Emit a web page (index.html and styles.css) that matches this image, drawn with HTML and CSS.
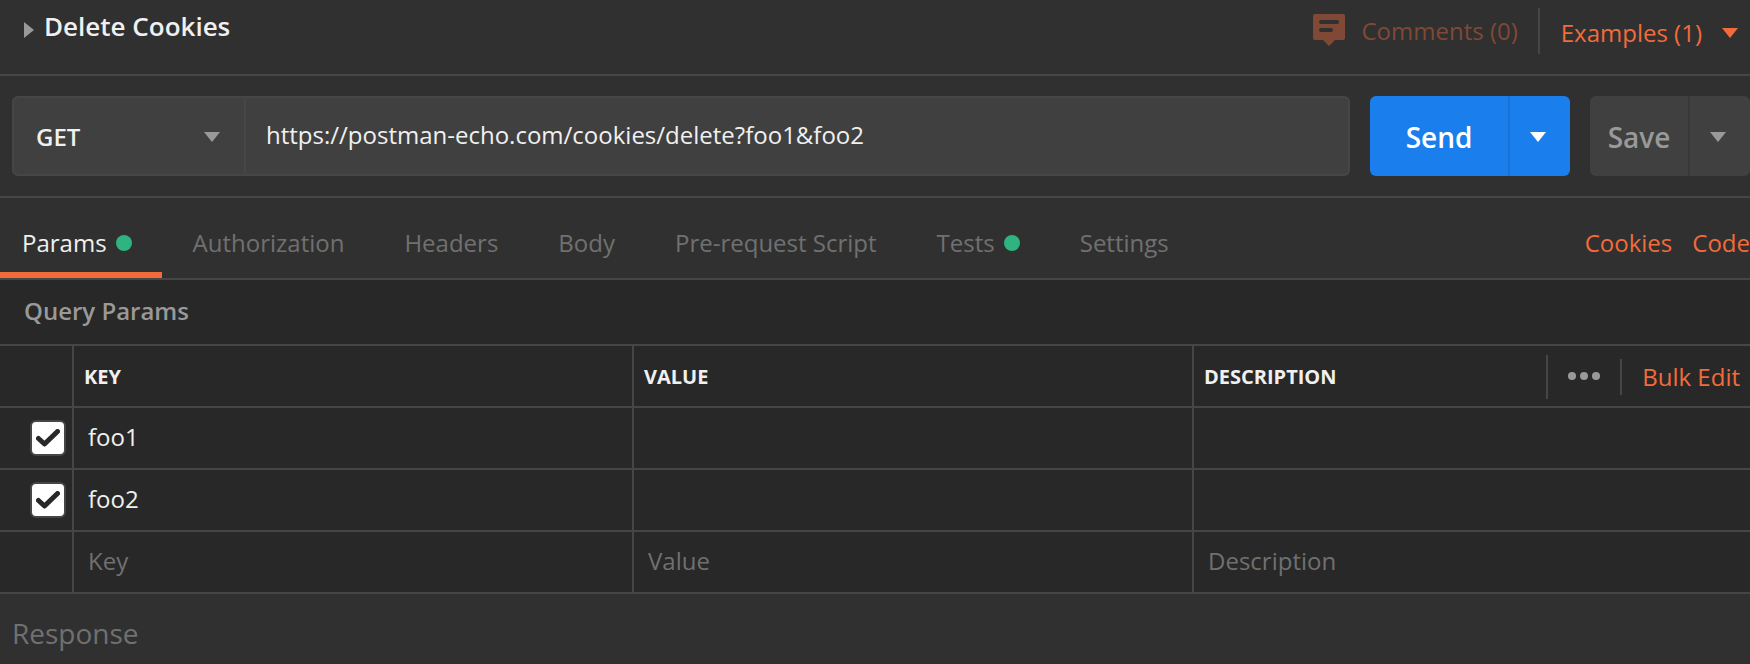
FILE: index.html
```html
<!DOCTYPE html>
<html lang="en">
<head>
<meta charset="utf-8">
<title>Delete Cookies</title>
<link rel="stylesheet" href="styles.css">
</head>
<body>
<header class="topbar">
  <button class="title" type="button" aria-expanded="false">
    <svg class="title-caret" width="10" height="16" viewBox="0 0 10 16" aria-hidden="true"><path d="M0 0L10 8L0 16Z" fill="currentColor"/></svg>
    <span>Delete Cookies</span>
  </button>
  <div class="topbar-actions">
    <button class="comments" type="button" disabled>
      <svg class="comments-icon" width="32" height="32" viewBox="0 0 32 32" aria-hidden="true">
        <path d="M2 0H30Q32 0 32 2V24Q32 26 30 26H22L16 32L10 26H2Q0 26 0 24V2Q0 0 2 0Z" fill="currentColor"/>
        <path d="M8 8H24M8 16H18" class="comments-lines"/>
      </svg>
      <span>Comments (0)</span>
    </button>
    <button class="examples" type="button">
      <span>Examples (1)</span>
      <svg width="16" height="10" viewBox="0 0 16 10" aria-hidden="true"><path d="M0 0H16L8 10Z" fill="currentColor"/></svg>
    </button>
  </div>
</header>

<form class="request">
  <div class="address">
    <div class="method">
      <select class="method-select" aria-label="HTTP method">
        <option>GET</option>
        <option>POST</option>
        <option>PUT</option>
        <option>DELETE</option>
      </select>
      <svg class="method-caret" width="16" height="10" viewBox="0 0 16 10" aria-hidden="true"><path d="M0 0H16L8 10Z" fill="currentColor"/></svg>
    </div>
    <input class="url" type="text" aria-label="Request URL" value="https://postman-echo.com/cookies/delete?foo1&amp;foo2">
  </div>
  <div class="split send">
    <button class="split-main" type="button">Send</button>
    <button class="split-more" type="button" aria-label="More send options">
      <svg width="16" height="10" viewBox="0 0 16 10" aria-hidden="true"><path d="M0 0H16L8 10Z" fill="currentColor"/></svg>
    </button>
  </div>
  <div class="split save">
    <button class="split-main" type="button">Save</button>
    <button class="split-more" type="button" aria-label="More save options">
      <svg width="16" height="10" viewBox="0 0 16 10" aria-hidden="true"><path d="M0 0H16L8 10Z" fill="currentColor"/></svg>
    </button>
  </div>
</form>

<nav class="tabs">
  <button class="tab tab-active" type="button">Params<span class="dot"></span></button>
  <button class="tab" type="button">Authorization</button>
  <button class="tab" type="button">Headers</button>
  <button class="tab" type="button">Body</button>
  <button class="tab" type="button">Pre-request Script</button>
  <button class="tab" type="button">Tests<span class="dot"></span></button>
  <button class="tab" type="button">Settings</button>
  <div class="tab-links">
    <a href="#cookies">Cookies</a>
    <a href="#code">Code</a>
  </div>
</nav>

<main class="params">
  <h2 class="params-title">Query Params</h2>
  <table class="grid">
    <colgroup><col class="col-check"><col class="col-field"><col class="col-field"><col></colgroup>
    <thead>
      <tr>
        <td></td>
        <th scope="col">KEY</th>
        <th scope="col">VALUE</th>
        <th scope="col">
          <div class="last-head">
            <span>DESCRIPTION</span>
            <div class="grid-actions">
              <button class="more" type="button" aria-label="Column options">
                <svg width="32" height="8" viewBox="0 0 32 8" aria-hidden="true"><g fill="currentColor"><circle cx="4" cy="4" r="4"/><circle cx="16" cy="4" r="4"/><circle cx="28" cy="4" r="4"/></g></svg>
              </button>
              <button class="bulk" type="button">Bulk Edit</button>
            </div>
          </div>
        </th>
      </tr>
    </thead>
    <tbody>
      <tr>
        <td class="check-cell">
          <label class="check"><input type="checkbox" aria-label="Enable foo1" checked><svg width="24" height="18" viewBox="0 0 24 18" aria-hidden="true"><path d="M2.500 9.500L8.500 15L21.500 2.500"/></svg></label>
        </td>
        <td><input class="cell" type="text" aria-label="Key 1" value="foo1"></td>
        <td><input class="cell" type="text" aria-label="Value 1"></td>
        <td><input class="cell" type="text" aria-label="Description 1"></td>
      </tr>
      <tr>
        <td class="check-cell">
          <label class="check"><input type="checkbox" aria-label="Enable foo2" checked><svg width="24" height="18" viewBox="0 0 24 18" aria-hidden="true"><path d="M2.500 9.500L8.500 15L21.500 2.500"/></svg></label>
        </td>
        <td><input class="cell" type="text" aria-label="Key 2" value="foo2"></td>
        <td><input class="cell" type="text" aria-label="Value 2"></td>
        <td><input class="cell" type="text" aria-label="Description 2"></td>
      </tr>
      <tr>
        <td></td>
        <td><input class="cell" type="text" aria-label="New key" placeholder="Key"></td>
        <td><input class="cell" type="text" aria-label="New value" placeholder="Value"></td>
        <td><input class="cell" type="text" aria-label="New description" placeholder="Description"></td>
      </tr>
    </tbody>
  </table>
</main>

<section class="response">
  <h2 class="response-title">Response</h2>
</section>
</body>
</html>
```
FILE: styles.css
```css
:root {
  --bg: #303030;
  --panel: #282828;
  --field: #404040;
  --line: #464646;
  --text: #f0f0f0;
  --muted: #999999;
  --faint: #707070;
  --accent: #f26b3a;
  --blue: #1a7fec;
  --green: #2fb380;
}

* {
  box-sizing: border-box;
}

body {
  margin: 0;
  background: var(--bg);
  color: var(--text);
  font: 24px/36px "Open Sans", "Noto Sans", sans-serif;
}

button,
input,
select {
  margin: 0;
  padding: 0;
  border: 0;
  background: none;
  color: inherit;
  font: inherit;
  outline: 0;
}

svg {
  display: block;
  flex: none;
}

h2 {
  margin: 0;
}

/* Title bar */
.topbar {
  display: flex;
  justify-content: space-between;
  align-items: flex-start;
  padding: 8px 12px 20px 24px;
  border-bottom: 2px solid var(--line);
}

.title {
  display: flex;
  align-items: center;
  gap: 10px;
  font-size: 26px;
  font-weight: 600;
}

.title-caret {
  margin-top: 8px;
  color: var(--muted);
}

.topbar-actions {
  display: flex;
}

.comments,
.examples {
  display: flex;
  align-items: center;
  height: 46px;
  color: var(--accent);
}

.comments {
  gap: 16px;
  padding-right: 20px;
  border-right: 2px solid var(--line);
  color: #7f4936;
}

.comments-icon {
  margin-bottom: 2px;
}

.comments-lines {
  stroke: var(--bg);
  stroke-width: 4;
  stroke-linecap: round;
}

.examples {
  gap: 20px;
  padding: 4px 0 0 21px;
}

/* Request line */
.request {
  display: flex;
  gap: 20px;
  padding: 20px 0 20px 12px;
  border-bottom: 2px solid var(--line);
}

.address {
  display: flex;
  flex: 1;
  height: 80px;
  border: 2px solid var(--line);
  border-radius: 6px;
  background: var(--field);
}

.method {
  position: relative;
  width: 232px;
  border-right: 2px solid var(--line);
}

.method-select {
  width: 100%;
  height: 100%;
  padding: 2px 48px 0 22px;
  appearance: none;
  font-weight: 600;
}

.method-caret {
  position: absolute;
  top: 34px;
  right: 24px;
  color: var(--muted);
  pointer-events: none;
}

.url {
  flex: 1;
  padding: 0 20px 2px;
}

.split {
  display: flex;
  height: 80px;
  border-radius: 6px;
  overflow: hidden;
  font-size: 28px;
  font-weight: 600;
}

.split-main {
  flex: 1;
  padding-top: 2px;
}

.split-more {
  display: flex;
  align-items: center;
  width: 62px;
  padding: 2px 0 0 20px;
  border-left: 2px solid;
}

.send {
  width: 200px;
  background: var(--blue);
  color: #ffffff;
}

.save {
  width: 160px;
  background: var(--field);
  color: var(--muted);
}

.send .split-more {
  border-left-color: #1873d8;
}

.save .split-more {
  border-left-color: #383838;
}

/* Request tabs */
.tabs {
  display: flex;
  height: 82px;
  border-bottom: 2px solid var(--line);
}

.tab {
  display: flex;
  align-items: center;
  gap: 9px;
  padding: 16px 29px 0 31px;
  border-bottom: 6px solid transparent;
  color: var(--faint);
}

.tab-active {
  border-bottom-color: var(--accent);
  color: var(--text);
}

.tab:first-child {
  padding-left: 22px;
  padding-right: 30px;
}

.dot {
  width: 16px;
  height: 16px;
  border-radius: 50%;
  background: var(--green);
}

.tab-links {
  display: flex;
  align-items: center;
  gap: 20px;
  margin-left: auto;
  padding: 16px 0 6px;
}

.tab-links a {
  color: var(--accent);
  text-decoration: none;
}

/* Query parameter grid */
.params {
  background: var(--panel);
}

.params-title {
  padding: 13px 24px 15px;
  color: var(--muted);
  font-size: 24px;
  font-weight: 600;
}

.grid {
  width: 100%;
  table-layout: fixed;
  border-spacing: 0;
  border-top: 2px solid var(--line);
}

.col-check {
  width: 72px;
}

.col-field {
  width: 32%;
}

.grid th,
.grid td {
  height: 62px;
  padding: 0;
  border-bottom: 2px solid var(--line);
}

.grid th,
.grid td + td {
  border-left: 2px solid var(--line);
}

.grid th {
  padding: 2px 0 0 10px;
  font-size: 20px;
  font-weight: 700;
  text-align: left;
}

.last-head,
.grid-actions {
  display: flex;
  align-items: center;
}

.last-head {
  justify-content: space-between;
}

.more {
  display: flex;
  align-items: center;
  height: 44px;
  padding: 0 20px 2px;
  border-left: 2px solid var(--line);
  color: var(--muted);
}

.bulk {
  padding: 0 10px 0 20px;
  border-left: 2px solid var(--line);
  color: var(--accent);
  font-size: 24px;
  font-weight: 400;
}

.check-cell {
  vertical-align: middle;
}

.check {
  display: grid;
  place-items: center;
  width: 36px;
  margin: 0 6px 0 auto;
}

.check input,
.check svg {
  grid-area: 1 / 1;
}

.check input {
  width: 36px;
  height: 36px;
  border: 2px solid var(--line);
  border-radius: 6px;
  background: #ffffff;
  appearance: none;
}

.check svg {
  fill: none;
  stroke: var(--panel);
  stroke-width: 5;
  stroke-linecap: round;
  stroke-linejoin: round;
  pointer-events: none;
}

.check input:not(:checked) + svg {
  visibility: hidden;
}

.cell {
  display: block;
  width: 100%;
  height: 60px;
  padding: 0 14px 4px;
}

.cell::placeholder {
  color: var(--faint);
  opacity: 1;
}

/* Response */
.response {
  padding: 20px 12px 12px;
}

.response-title {
  color: var(--faint);
  font-size: 28px;
  line-height: 38px;
  font-weight: 400;
}
```
